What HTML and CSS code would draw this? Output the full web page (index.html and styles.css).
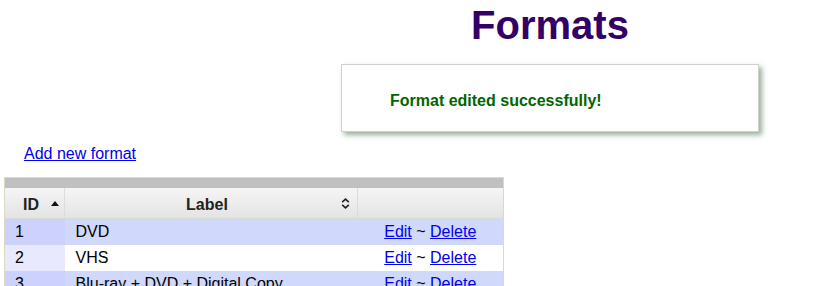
FILE: index.html
```html
<!DOCTYPE html>
<html>
<head>
	<meta charset="utf-8">
	<title>Formats</title>
	<link rel="stylesheet" href="styles.css">
</head>
<body>
	<div class="top">
		<div class="side"></div>
		<div class="main">
			<h1 class="title">Formats</h1>
			<div class="notice">Format edited successfully!</div>
		</div>
	</div>

	<p class="add-link"><a href="#">Add new format</a></p>

	<table class="formats">
		<colgroup>
			<col class="col-id">
			<col class="col-label">
			<col class="col-act">
		</colgroup>
		<thead>
			<tr class="bar"><th colspan="3"></th></tr>
			<tr class="head">
				<th class="h-id">ID
					<svg class="sort-up" width="8" height="5" viewBox="0 0 8 5"><polygon points="0,5 4,0 8,5" fill="#111"/></svg>
				</th>
				<th class="h-label">Label
					<svg class="sort-both" width="9" height="11" viewBox="0 0 9 11"><polyline points="1.2,4.2 4.5,1.2 7.8,4.2" fill="none" stroke="#222" stroke-width="1.6"/><polyline points="1.2,6.8 4.5,9.8 7.8,6.8" fill="none" stroke="#222" stroke-width="1.6"/></svg>
				</th>
				<th class="h-act"></th>
			</tr>
		</thead>
		<tbody>
			<tr class="odd">
				<td class="id">1</td>
				<td>DVD</td>
				<td class="act"><a href="#">Edit</a> ~ <a href="#">Delete</a></td>
			</tr>
			<tr class="even">
				<td class="id">2</td>
				<td>VHS</td>
				<td class="act"><a href="#">Edit</a> ~ <a href="#">Delete</a></td>
			</tr>
			<tr class="odd">
				<td class="id">3</td>
				<td>Blu-ray + DVD + Digital Copy</td>
				<td class="act"><a href="#">Edit</a> ~ <a href="#">Delete</a></td>
			</tr>
		</tbody>
	</table>
</body>
</html>
```

FILE: styles.css
```css
body {
	margin: 0;
	font-family: "Liberation Sans", Arial, sans-serif;
	font-size: 16px;
	background: #fff;
	color: #000;
}
a { color: #0000ee; }

.top { display: flex; }
.side { width: 270px; flex: none; }
.main {
	flex: 1;
	display: flex;
	flex-direction: column;
	align-items: center;
}
.title {
	margin: 2px 0 16px 0;
	font-size: 40px;
	line-height: 46px;
	font-weight: bold;
	color: #330066;
}
.notice {
	box-sizing: border-box;
	width: 418px;
	height: 68px;
	padding: 27px 0 0 48px;
	border: 1px solid #d0d0d0;
	box-shadow: 3px 3px 5px rgba(70, 110, 70, 0.55);
	font-weight: bold;
	line-height: 18px;
	color: #006600;
	background: #fff;
}

.add-link {
	margin: 13px 0 0 24px;
	line-height: 18px;
}

.formats {
	margin: 14px 0 0 4px;
	width: 499px;
	border-collapse: collapse;
	border: 1px solid #ddd8c6;
	table-layout: fixed;
}
.col-id { width: 60px; }
.col-label { width: 293px; }
.col-act { width: 146px; }

.formats .bar th {
	height: 10px;
	padding: 0;
	background: #c0c0c0;
}
.formats .head th {
	height: 27px;
	padding: 3px 0 0 0;
	font-weight: bold;
	color: #222;
	background: linear-gradient(#f5f5f5, #e3e3e3);
	border-right: 1px solid #dcdcdc;
	border-bottom: 1px solid #d8d8d8;
	position: relative;
}
.formats .head th:last-child { border-right: none; }
.formats .head .h-id { text-align: left; padding-left: 18px; }
.formats .head .h-label { text-align: center; padding-right: 8px; }
.sort-up {
	position: absolute;
	left: 46px;
	top: 13px;
}
.sort-both {
	position: absolute;
	right: 7px;
	top: 10px;
}

.formats td {
	height: 26px;
	padding: 0 0 0 11px;
	line-height: 18px;
	white-space: nowrap;
	overflow: hidden;
}
.formats td.id { padding-left: 10px; }
.formats td.act { text-align: center; padding: 0; }
.odd td { background: #d0d8fb; }
.odd td.id { background: #cdd2fd; }
.even td { background: #fff; }
.even td.id { background: #e8e9ff; }
```
